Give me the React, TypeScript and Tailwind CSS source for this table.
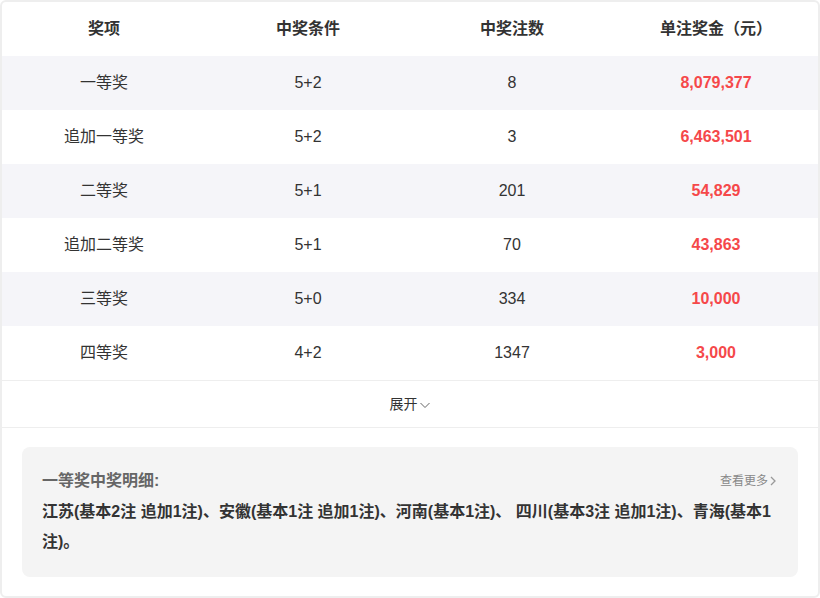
import React from "react";

const rows = [
  ["一等奖", "5+2", "8", "8,079,377"],
  ["追加一等奖", "5+2", "3", "6,463,501"],
  ["二等奖", "5+1", "201", "54,829"],
  ["追加二等奖", "5+1", "70", "43,863"],
  ["三等奖", "5+0", "334", "10,000"],
  ["四等奖", "4+2", "1347", "3,000"],
];

export default function App() {
  return (
    <div
      className="w-[820px] h-[598px] bg-white"
      style={{ fontFamily: '"Liberation Sans", Arial, "Noto Sans CJK SC", sans-serif' }}
    >
      <div className="h-full border-2 border-[#eeeeee] rounded-[6px] flex flex-col">
        <div className="grid grid-cols-4 h-[54px] items-center text-[16px] font-bold text-[#333]">
          <div className="text-center">奖项</div>
          <div className="text-center">中奖条件</div>
          <div className="text-center">中奖注数</div>
          <div className="text-center">单注奖金（元）</div>
        </div>
        {rows.map((r, i) => (
          <div
            key={i}
            className={`grid grid-cols-4 h-[54px] items-center text-[16px] text-[#333] ${i % 2 === 0 ? "bg-[#f5f5f9]" : "bg-white"}`}
          >
            <div className="text-center">{r[0]}</div>
            <div className="text-center">{r[1]}</div>
            <div className="text-center">{r[2]}</div>
            <div className="text-center font-bold text-[#f5484a]">{r[3]}</div>
          </div>
        ))}
        <div className="h-[48px] border-t border-b border-[#eeeeee] flex items-center justify-center text-[14px] text-[#333]">
          <span className="mt-[1px]">展开</span>
          <svg width="12" height="12" viewBox="0 0 12 12" className="ml-[1px] mt-[2px]">
            <path d="M1.5 4 L6 8.5 L10.5 4" fill="none" stroke="#666" strokeWidth="1" />
          </svg>
        </div>
        <div className="px-[20px] pt-[19px]">
          <div className="bg-[#f4f4f4] rounded-[8px] px-[20px] pt-[22px] pb-[20px]">
            <div className="flex items-center justify-between h-[24px]">
              <span className="text-[16px] font-bold text-[#666]">一等奖中奖明细:</span>
              <span className="flex items-center text-[12px] text-[#888] mr-[1px]">
                查看更多
                <svg width="8" height="12" viewBox="0 0 8 12" className="ml-[1px]">
                  <path d="M2 2 L6 6 L2 10" fill="none" stroke="#999" strokeWidth="1.3" />
                </svg>
              </span>
            </div>
            <div className="text-[16px] font-bold text-[#333] leading-[30px] mt-[4px]">
              江苏(基本2注 追加1注)、安徽(基本1注 追加1注)、河南(基本1注)、 四川(基本3注 追加1注)、青海(基本1注)。
            </div>
          </div>
        </div>
      </div>
    </div>
  );
}
